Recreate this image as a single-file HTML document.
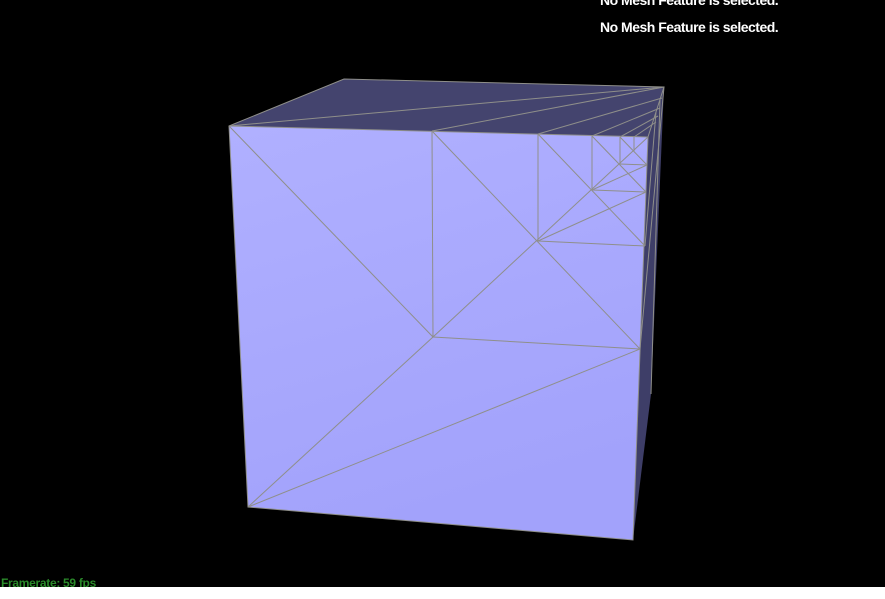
<!DOCTYPE html>
<html><head><style>
html,body{margin:0;padding:0;width:885px;height:599px;overflow:hidden;background:#000;font-family:"Liberation Sans",sans-serif}
.t{position:absolute;color:#fff;font-size:14px;font-weight:bold;letter-spacing:-0.5px}
</style></head><body>
<svg width="885" height="599" style="position:absolute;left:0;top:0">
<defs><linearGradient id="g" x1="0" y1="0" x2="0.3" y2="1"><stop offset="0" stop-color="#b0b0ff"/><stop offset="1" stop-color="#a2a2fb"/></linearGradient></defs>
<polygon points="229,126 344,79 664,87 648,137" fill="#44446e"/>
<polygon points="664,87 648,137 633,540 651,394" fill="#3e3e68"/>
<polygon points="229,126 648,137 633,540 248,507" fill="url(#g)"/>
<g stroke="#8f8f8a" stroke-width="1" fill="none">
<polygon points="229,126 344,79 664,87 648,137 633,540 248,507"/>
<line x1="229" y1="126" x2="648" y2="137"/>
<line x1="229" y1="126" x2="664" y2="87"/>
<line x1="432" y1="131" x2="664" y2="87"/>
<line x1="538" y1="134" x2="662" y2="98"/>
<line x1="592" y1="136" x2="660" y2="108"/>
<line x1="620" y1="137" x2="658" y2="116"/>
<line x1="634" y1="137" x2="656" y2="122"/>
<line x1="664" y1="87" x2="640" y2="349"/>
<line x1="660" y1="100" x2="651" y2="394"/>
<line x1="656" y1="112" x2="645" y2="246"/>
<line x1="229" y1="126" x2="433" y2="337"/>
<line x1="432" y1="131" x2="433" y2="337"/>
<line x1="433" y1="337" x2="640" y2="349"/>
<line x1="433" y1="337" x2="248" y2="507"/>
<line x1="248" y1="507" x2="640" y2="349"/>
<line x1="433" y1="337" x2="648" y2="137"/>
<line x1="432" y1="131" x2="640" y2="349"/>
<line x1="538" y1="134" x2="538" y2="241"/>
<line x1="538" y1="241" x2="645" y2="246"/>
<line x1="538" y1="241" x2="646" y2="192"/>
<line x1="592" y1="136" x2="592" y2="190"/>
<line x1="592" y1="190" x2="646" y2="192"/>
<line x1="538" y1="134" x2="645" y2="246"/>
<line x1="592" y1="136" x2="646" y2="192"/>
<line x1="592" y1="190" x2="647" y2="165"/>
<line x1="620" y1="137" x2="620" y2="164"/>
<line x1="620" y1="164" x2="647" y2="165"/>
<line x1="620" y1="137" x2="647" y2="165"/>
<line x1="634" y1="137" x2="634" y2="151"/>
</g>
</svg>
<div class="t" style="left:600px;top:-8px">No Mesh Feature is selected.</div>
<div class="t" style="left:600px;top:19px">No Mesh Feature is selected.</div>
<div style="position:absolute;left:0;top:587px;width:885px;height:12px;background:#fff"></div>
<div style="position:absolute;left:1px;top:575px;height:12px;overflow:hidden;color:#2a8a2a;font-size:12px;font-weight:bold;line-height:16px;letter-spacing:-0.3px">Framerate: 59 fps</div>
</body></html>
